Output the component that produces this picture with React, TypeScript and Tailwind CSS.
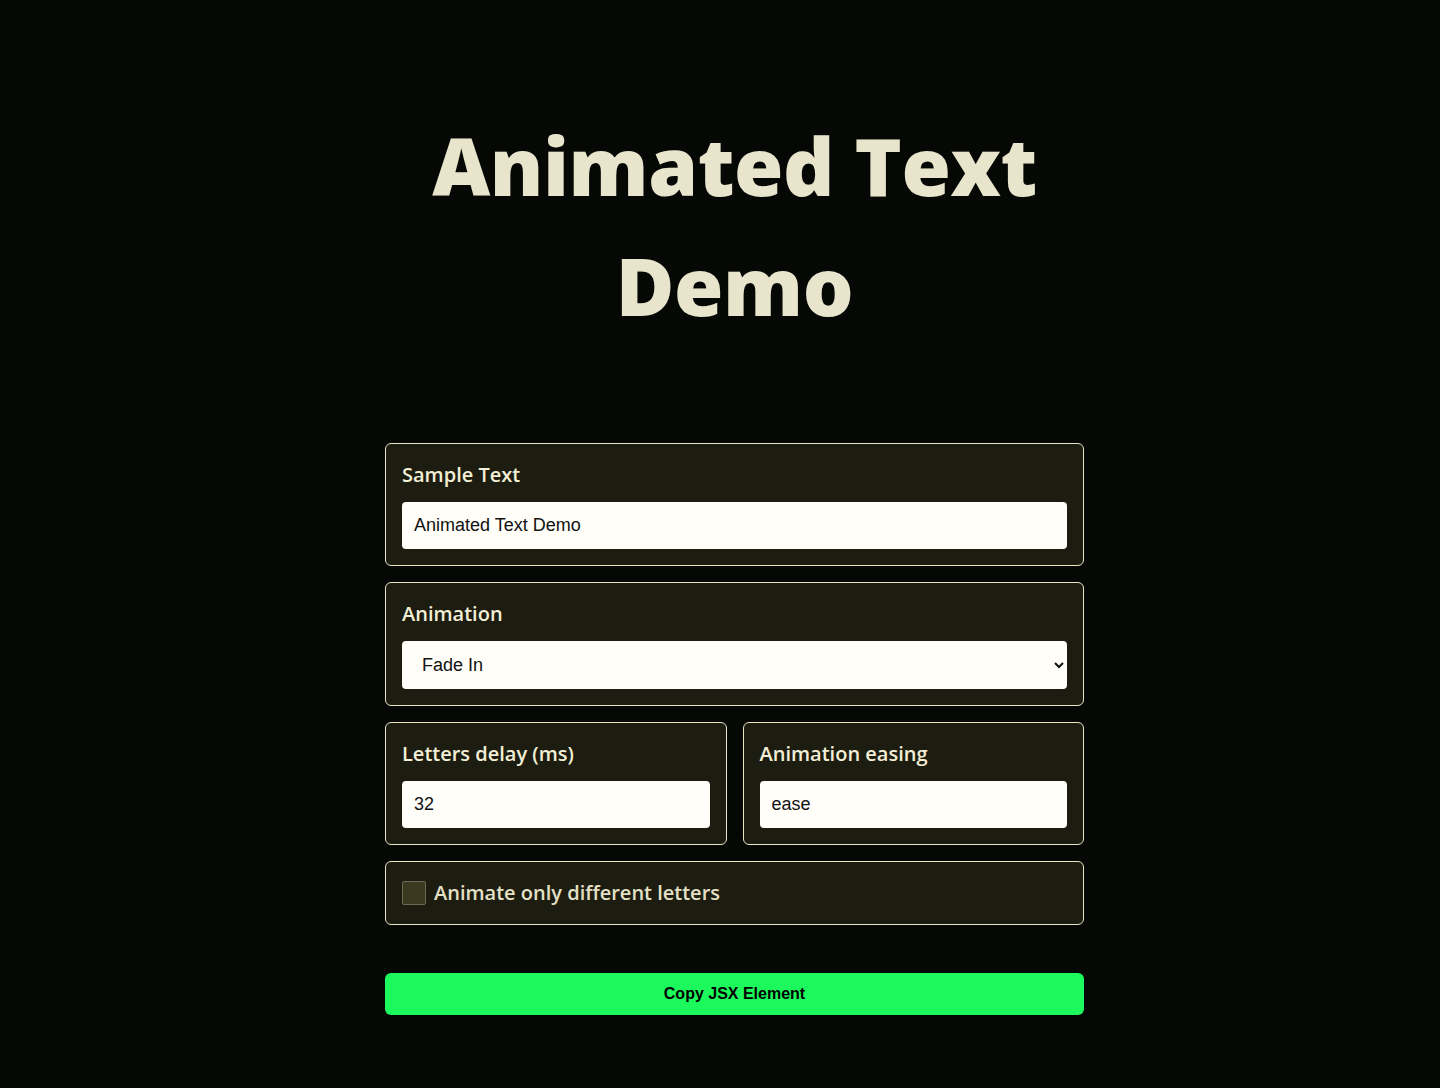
import { useState } from 'react'

const field = 'bg-[#1d1c10] border border-[#e8e4c4] rounded-md p-4'
const label =
  "block text-[20px] leading-[30px] font-semibold text-[#f3efd6] mb-3 font-['Open_Sans',sans-serif]"
const input =
  "w-full h-[47.4px] bg-[#fffef8] rounded-[4px] px-3 text-[18px] text-[#111] outline-none font-['Liberation_Sans',sans-serif]"

export default function App() {
  const [text, setText] = useState('Animated Text Demo')
  const [anim, setAnim] = useState('fade-in')
  const [delay, setDelay] = useState('32')
  const [easing, setEasing] = useState('ease')
  const [diffOnly, setDiffOnly] = useState(false)

  return (
    <div className="min-h-[1088px] bg-[#060806] flex flex-col items-center pt-[105px] pl-[29px]">
      <h1 className="w-[699px] text-center text-[80px] leading-[120px] font-extrabold text-[#e8e5cc] tracking-[-0.4px] font-['Open_Sans',sans-serif]">
        {text}
      </h1>

      <div className="w-[699px] mt-[98px] flex flex-col gap-4">
        {/* Sample text */}
        <div className={field}>
          <label className={label}>Sample Text</label>
          <input className={input} value={text} onChange={(e) => setText(e.target.value)} />
        </div>

        {/* Animation */}
        <div className={field}>
          <label className={label}>Animation</label>
          <select className={`${input} pl-4`} value={anim} onChange={(e) => setAnim(e.target.value)}>
            <option value="fade-in">Fade In</option>
            <option value="slide-up">Slide Up</option>
            <option value="zoom">Zoom</option>
          </select>
        </div>

        <div className="grid grid-cols-2 gap-4">
          <div className={field}>
            <label className={label}>Letters delay (ms)</label>
            <input className={input} value={delay} onChange={(e) => setDelay(e.target.value)} />
          </div>
          <div className={field}>
            <label className={label}>Animation easing</label>
            <input className={input} value={easing} onChange={(e) => setEasing(e.target.value)} />
          </div>
        </div>

        <label className={`${field} flex items-center gap-2 py-[19px] cursor-pointer`}>
          <span
            className={`w-6 h-6 rounded-[2px] border border-[#6b6a52] ${diffOnly ? 'bg-[#e7e3c2]' : 'bg-[#3a391f]'}`}
          />
          <input
            type="checkbox"
            className="hidden"
            checked={diffOnly}
            onChange={(e) => setDiffOnly(e.target.checked)}
          />
          <span className="text-[20px] leading-[24px] font-semibold text-[#e4e0c6] font-['Open_Sans',sans-serif]">
            Animate only different letters
          </span>
        </label>

        <button className="mt-8 h-[42px] rounded-md bg-[#1cf95c] text-[16px] font-bold text-black font-['Liberation_Sans',sans-serif]">
          Copy JSX Element
        </button>
      </div>
    </div>
  )
}
